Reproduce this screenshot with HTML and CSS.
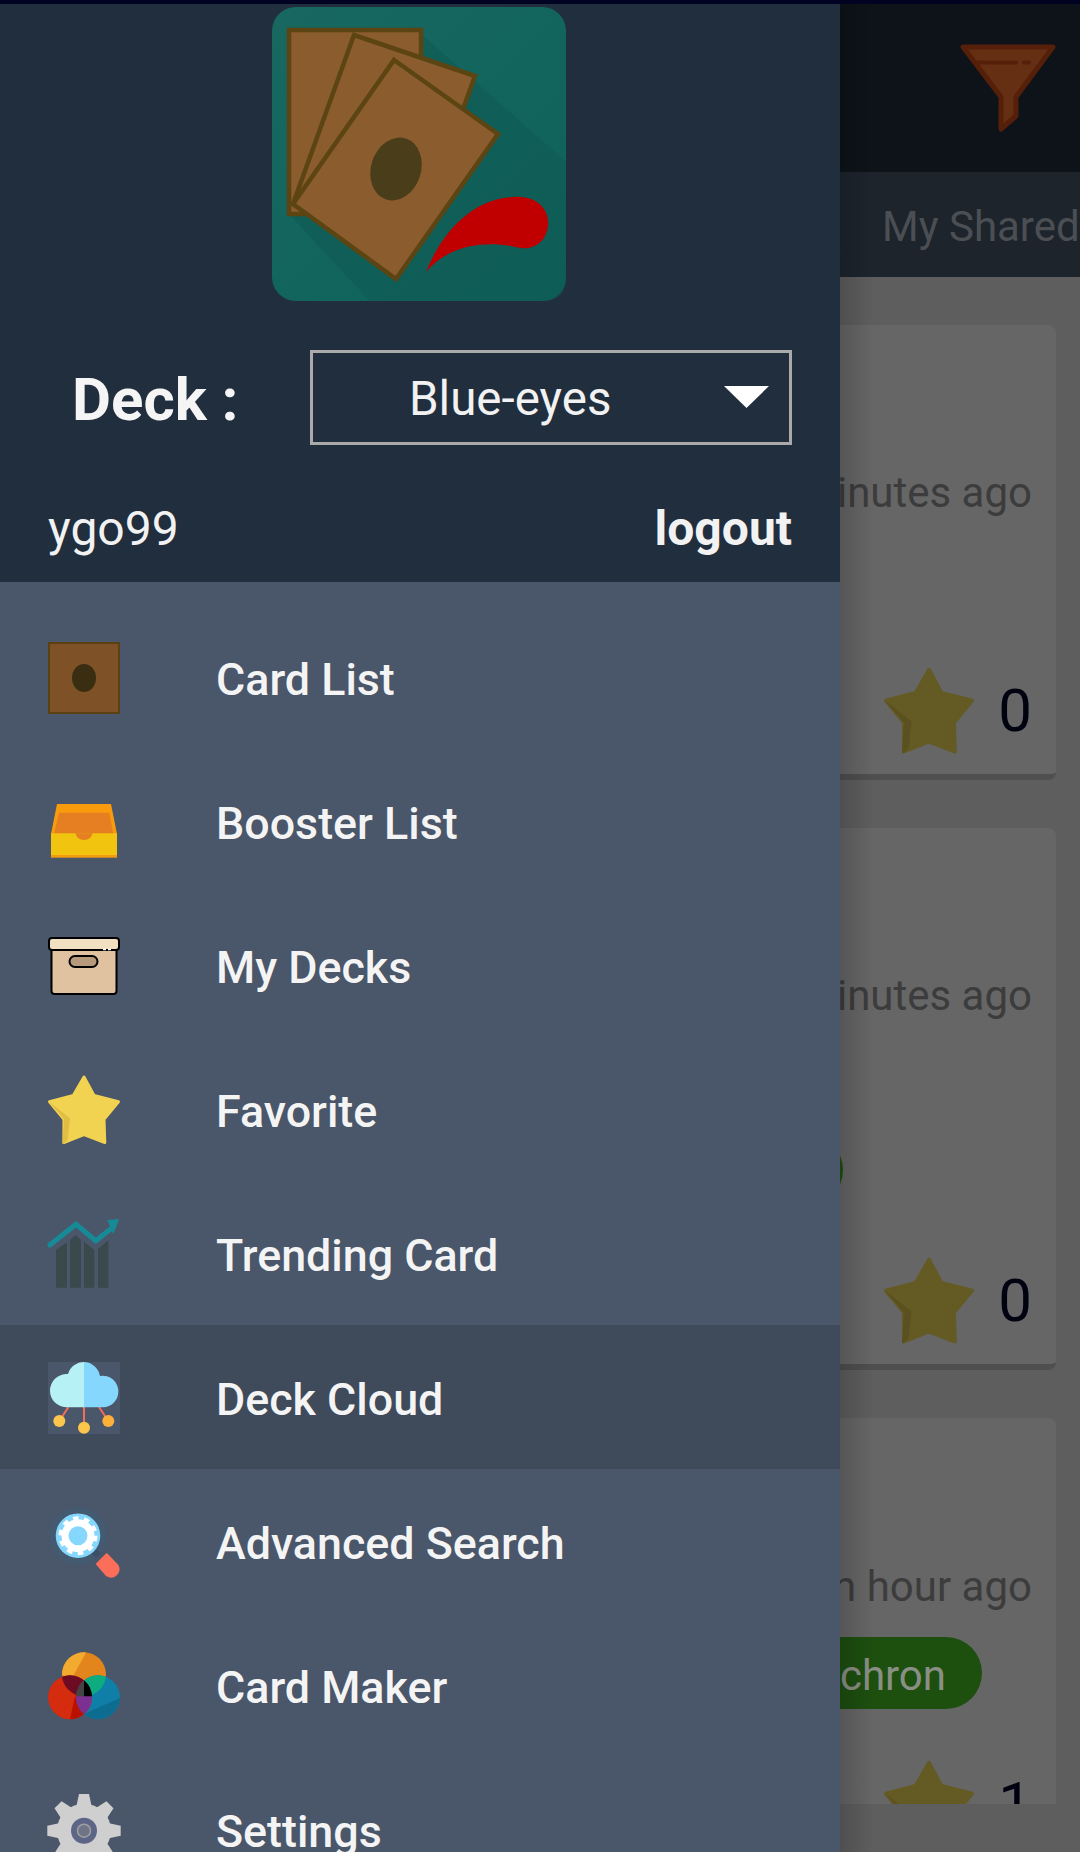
FILE: index.html
```html
<!DOCTYPE html>
<html lang="en">
<head>
<meta charset="utf-8">
<title>Deck Cloud</title>
<link rel="stylesheet" href="styles.css">
</head>
<body>
<svg class="defs" width="0" height="0" aria-hidden="true">
  <defs>
    <symbol id="star" viewBox="0 0 72 72">
      <path class="star-body" d="M36 3 46 21.500 70.500 27.700 56 45.300 56.800 68.500 36 60.500 15.800 68.500 16 45.300 1.500 27.700 25.300 21.500Z"/>
      <path class="star-shade" d="M1 27.700 22 44.300 19.700 66 14.500 70 16 45.300Z"/>
    </symbol>
    <clipPath id="clip-orange"><circle cx="36" cy="24.300" r="22"/></clipPath>
    <clipPath id="clip-red"><circle cx="22" cy="47.300" r="22"/></clipPath>
    <clipPath id="clip-blue"><circle cx="50" cy="47.300" r="22"/></clipPath>
  </defs>
</svg>

<div class="app">
  <div class="status"></div>
  <header class="topbar">
    <svg class="funnel" viewBox="0 0 96 88">
      <path class="funnel-body" d="M3 3H93L56 53V72L41 85V53Z"/>
      <path class="funnel-mark" d="M17 18.500H56M64 18.500H69"/>
    </svg>
  </header>
  <nav class="tabs">
    <span class="tab tab-public">Public Decks</span>
    <span class="tab">My Shared Decks</span>
  </nav>
  <main class="list">
    <article class="card card-one">
      <p class="time">20 minutes ago</p>
      <div class="likes">
        <svg class="like-star"><use href="#star"/></svg>
        <span class="count">0</span>
      </div>
    </article>
    <article class="card card-two">
      <p class="time">25 minutes ago</p>
      <div class="chips chips-two"><span class="chip">Dragon</span></div>
      <div class="likes">
        <svg class="like-star"><use href="#star"/></svg>
        <span class="count">0</span>
      </div>
    </article>
    <article class="card card-three">
      <p class="time">an hour ago</p>
      <div class="chips chips-three"><span class="chip">Synchron</span></div>
      <div class="likes">
        <svg class="like-star"><use href="#star"/></svg>
        <span class="count">1</span>
      </div>
    </article>
  </main>

  <aside class="drawer">
    <div class="drawer-head">
      <svg class="logo" viewBox="0 0 294 294">
        <defs>
          <linearGradient id="logo-bg" x1="0" y1="0" x2="1" y2="1">
            <stop offset="0" stop-color="#186860"/>
            <stop offset="1" stop-color="#0c625a"/>
          </linearGradient>
        </defs>
        <rect width="294" height="294" rx="24" fill="url(#logo-bg)"/>
        <path class="logo-shadow" d="M149 27 294 155V270Q294 294 270 294H98L17 207Z"/>
        <rect class="logo-card" x="17" y="23" width="132" height="184"/>
        <path class="logo-card" d="M82 28 203 69 142 238 21 197Z"/>
        <path class="logo-card" d="M122 53 226 127 124 272 21 197Z"/>
        <ellipse class="logo-hole" cx="124" cy="162" rx="25" ry="32" transform="rotate(18 124 162)"/>
        <path class="logo-swoosh" d="M154 265C170 225 200 192 241 190 265 188 278 203 276 219 274 235 262 243 248 241 225 235 182 232 154 265Z"/>
      </svg>
      <div class="deck-row">
        <span class="deck-label">Deck :</span>
        <div class="deck-select">
          <span class="deck-name">Blue-eyes</span>
          <svg class="deck-arrow" viewBox="0 0 45 22"><path d="M0 0H45L22.500 22Z"/></svg>
        </div>
      </div>
      <div class="user-row">
        <span class="user-name">ygo99</span>
        <span class="logout">logout</span>
      </div>
    </div>

    <ul class="menu">
      <li class="menu-item">
        <svg class="menu-icon" viewBox="0 0 72 72">
          <rect x="1" y="1" width="70" height="70" fill="#7e5226" stroke="#5b4013" stroke-width="2"/>
          <ellipse cx="36" cy="36" rx="12" ry="14" fill="#3a2e12"/>
        </svg>
        <span class="menu-label">Card List</span>
      </li>
      <li class="menu-item">
        <svg class="menu-icon" viewBox="0 0 72 72">
          <path fill="#f89c0e" d="M9 18H63L69 48H3Z"/>
          <path fill="#e57f22" d="M11 26.700H61.300L65.300 48H6Z"/>
          <rect x="3" y="47.300" width="66" height="22" fill="#f0c40f"/>
          <path fill="#e57f22" d="M27.700 47.300A8.300 6.700 0 0 0 44.300 47.300Z"/>
          <rect x="3" y="69" width="66" height="2.700" fill="#f39c12"/>
        </svg>
        <span class="menu-label">Booster List</span>
      </li>
      <li class="menu-item">
        <svg class="menu-icon" viewBox="0 0 72 72">
          <rect x="3.500" y="16" width="65" height="48" rx="3" fill="#e0c2a0" stroke="#000" stroke-width="2"/>
          <rect x="1" y="8" width="70" height="12" rx="3" fill="#f0dfc0" stroke="#000" stroke-width="2"/>
          <path d="M55 19.500H64" stroke="#fff" stroke-width="1.500" stroke-dasharray="3 2"/>
          <rect x="21.500" y="26" width="28" height="11" rx="5.500" fill="#b79a7c" stroke="#000" stroke-width="2"/>
        </svg>
        <span class="menu-label">My Decks</span>
      </li>
      <li class="menu-item">
        <svg class="menu-icon" viewBox="0 0 72 72">
          <path fill="#f1d351" stroke="#f1d351" stroke-width="3" stroke-linejoin="round" d="M36 3 46 21.500 70.500 27.700 56 45.300 56.800 68.500 36 60.500 15.800 68.500 16 45.300 1.500 27.700 25.300 21.500Z"/>
          <path fill="#e2bd44" d="M1 27.700 22 44.300 19.700 66 14.500 70 16 45.300Z"/>
        </svg>
        <span class="menu-label">Favorite</span>
      </li>
      <li class="menu-item">
        <svg class="menu-icon" viewBox="0 0 72 72">
          <path fill="#3a4a4c" d="M8 32 19 24.300V69.700H8ZM22 22 27.700 17 33 22V69.700H22ZM36 23.700 46.300 32V69.700H36ZM50 31 60.300 22.300V69.700H50Z"/>
          <path fill="none" stroke="#178a98" stroke-width="5" stroke-linecap="round" d="M1.800 27 28 6.300 47.700 22.700 63.700 10.300"/>
          <path fill="#178a98" d="M59.300 2 71.300 1 65.300 16.300Z"/>
        </svg>
        <span class="menu-label">Trending Card</span>
      </li>
      <li class="menu-item menu-item-active">
        <svg class="menu-icon" viewBox="0 0 72 72">
          <rect width="72" height="72" fill="#4a5669"/>
          <path fill="none" stroke="#f56c5a" stroke-width="2" d="M20.300 45.300 11.300 59M36 45V65M51 45 60.300 59"/>
          <path fill="#b5f1f5" d="M36 0A16.700 16.700 0 0 0 20 12 16.700 16.700 0 0 0 2 29 16.500 16.500 0 0 0 18 45.300H36Z"/>
          <path fill="#85d7fd" d="M36 0A16.700 16.700 0 0 1 52 14 15.500 15.500 0 0 1 70.300 30 15.500 15.500 0 0 1 55 45.300H36Z"/>
          <circle cx="11.300" cy="59" r="6" fill="#fcc64c"/>
          <circle cx="36" cy="65.700" r="6" fill="#fcc64c"/>
          <circle cx="60.300" cy="59" r="6" fill="#fbb03b"/>
        </svg>
        <span class="menu-label">Deck Cloud</span>
      </li>
      <li class="menu-item">
        <svg class="menu-icon" viewBox="0 0 72 72">
          <circle cx="30" cy="29.700" r="29" fill="#435a70"/>
          <circle cx="30" cy="29.700" r="22.300" fill="#85d7fd"/>
          <circle cx="30" cy="29.700" r="13" fill="none" stroke="#fff" stroke-width="7"/>
          <circle cx="30" cy="29.700" r="17.500" fill="none" stroke="#fff" stroke-width="4" stroke-dasharray="5.500 5.500"/>
          <path d="M46 50 51 45.500" stroke="#3b5068" stroke-width="6"/>
          <path fill="#fa6e5a" stroke="#fa6e5a" stroke-width="2" stroke-linejoin="round" d="M49 58 58.700 48.300 69.500 59.500A7.500 7.500 0 0 1 59 69.500Z"/>
        </svg>
        <span class="menu-label">Advanced Search</span>
      </li>
      <li class="menu-item">
        <svg class="menu-icon" viewBox="0 0 72 72">
          <circle cx="36" cy="24.300" r="22" fill="#e2851d"/>
          <path fill="#f2aa2f" d="M14 24.300A22 22 0 0 1 38 2.400L22 32Z"/>
          <circle cx="50" cy="47.300" r="22" fill="#0f7fa8"/>
          <path fill="#0c6d91" d="M36 64 72 48A22 22 0 0 1 36 64Z"/>
          <circle cx="22" cy="47.300" r="22" fill="#d52b0e"/>
          <path fill="#b91100" d="M27 46 36 64A22 22 0 0 1 22 69.300Z"/>
          <g clip-path="url(#clip-orange)">
            <rect x="0" y="25" width="36" height="47" fill="#6d0b22" clip-path="url(#clip-red)"/>
            <rect x="36" y="25" width="36" height="47" fill="#0ead80" clip-path="url(#clip-blue)"/>
          </g>
          <g clip-path="url(#clip-blue)">
            <rect x="28" y="25" width="16" height="47" fill="#7c3091" clip-path="url(#clip-red)"/>
          </g>
          <path fill="#444" d="M36 30.200A22 22 0 0 0 28 46.300H36Z"/>
          <path fill="#000" d="M36 30.200A22 22 0 0 1 44 46.300H36Z"/>
        </svg>
        <span class="menu-label">Card Maker</span>
      </li>
      <li class="menu-item">
        <svg class="menu-icon" viewBox="0 0 72 72">
          <g fill="#cfcfcf">
            <circle cx="36" cy="36.700" r="27"/>
            <path id="tooth" d="M31 0H41L44 14H28Z"/>
            <use href="#tooth" transform="rotate(45 36 36.700)"/>
            <use href="#tooth" transform="rotate(90 36 36.700)"/>
            <use href="#tooth" transform="rotate(135 36 36.700)"/>
            <use href="#tooth" transform="rotate(180 36 36.700)"/>
            <use href="#tooth" transform="rotate(225 36 36.700)"/>
            <use href="#tooth" transform="rotate(270 36 36.700)"/>
            <use href="#tooth" transform="rotate(315 36 36.700)"/>
          </g>
          <circle cx="36" cy="36.700" r="13" fill="#5e6688"/>
          <circle cx="36" cy="36.700" r="6.500" fill="#6f7487" stroke="#9ea0a0" stroke-width="1.500"/>
        </svg>
        <span class="menu-label">Settings</span>
      </li>
    </ul>
  </aside>
</div>
</body>
</html>
```

FILE: styles.css
```css
* { box-sizing: border-box; }

html, body {
  margin: 0;
  padding: 0;
  background: #5e5e5e;
}

body {
  font-family: Roboto, "Liberation Sans", sans-serif;
}

.defs { position: absolute; }

.app {
  position: relative;
  width: 1080px;
  height: 1852px;
  overflow: hidden;
  display: flex;
  flex-direction: column;
}

.status {
  height: 4px;
  flex: none;
  background: #000321;
}

.topbar {
  height: 168px;
  flex: none;
  background: #0d1318;
  display: flex;
  justify-content: flex-end;
  align-items: flex-start;
  padding: 40px 24px 0 0;
}

.funnel { width: 96px; height: 88px; }
.funnel-body { fill: #642f13; stroke: #561f0a; stroke-width: 5; stroke-linejoin: round; }
.funnel-mark { fill: none; stroke: #561f0a; stroke-width: 4; stroke-linecap: round; }

.tabs {
  height: 105px;
  flex: none;
  background: #1d242c;
  display: flex;
  align-items: center;
  white-space: nowrap;
  font-size: 42px;
  color: #4b4f54;
  padding-top: 4px;
}

.tab-public { flex: 0 0 882px; }

.list {
  height: 1527px;
  flex: none;
  overflow: hidden;
  padding: 48px 24px 0;
  display: flex;
  flex-direction: column;
  gap: 48px;
}

.card {
  flex: none;
  background: #666;
  border-bottom: 6px solid #4f4f4f;
  border-radius: 8px;
  padding: 142px 24px 20px;
}

.card-three { padding-top: 143px; }

.time {
  margin: 0;
  height: 48px;
  line-height: 52px;
  text-align: right;
  font-size: 42px;
  color: #3c3c3c;
}

.chips {
  display: flex;
  justify-content: flex-end;
  height: 72px;
}

.chips-two { margin: 116px 189px 0 0; }
.chips-three { margin: 28px 50px 0 0; }

.chip {
  height: 72px;
  line-height: 78px;
  padding: 0 36px;
  border-radius: 36px;
  background: #1d4f0f;
  color: #8a8f86;
  font-size: 42px;
}

.likes {
  display: flex;
  justify-content: flex-end;
  align-items: center;
  gap: 24px;
  height: 86px;
  margin-top: 52px;
}

.card-one .likes { margin-top: 153px; }

.like-star { width: 90px; height: 90px; }
.star-body { fill: #645a23; stroke: #645a23; stroke-width: 3; stroke-linejoin: round; }
.star-shade { fill: #5a5020; }

.count {
  font-size: 60px;
  line-height: 60px;
  color: #000210;
}

.drawer {
  position: absolute;
  left: 0;
  top: 4px;
  bottom: 0;
  width: 840px;
  background: #4a5669;
}

.drawer::after {
  content: "";
  position: absolute;
  left: 100%;
  top: 0;
  bottom: 0;
  width: 34px;
  background: linear-gradient(to right, rgba(0, 0, 0, .16), rgba(0, 0, 0, 0));
}

.drawer-head {
  height: 578px;
  background: #212e3e;
  display: flex;
  flex-direction: column;
  padding-top: 3px;
}

.logo {
  width: 294px;
  height: 294px;
  flex: none;
  margin-left: 272px;
}

.logo-shadow { fill: #0f5a53; opacity: .6; }
.logo-card { fill: #8a5c2e; stroke: #5c4413; stroke-width: 4.500; stroke-linejoin: miter; }
.logo-hole { fill: #4a3d1a; }
.logo-swoosh { fill: #c00000; }

.deck-row {
  display: flex;
  align-items: center;
  height: 95px;
  margin-top: 49px;
  padding: 0 48px 0 72px;
}

.deck-label {
  flex: 0 0 238px;
  font-size: 60px;
  font-weight: 700;
  color: #f5f5f5;
  padding-top: 4px;
}

.deck-select {
  position: relative;
  flex: 1;
  height: 95px;
  border: 3px solid #aaa;
  display: flex;
  align-items: center;
  padding-left: 96px;
}

.deck-name {
  font-size: 47.500px;
  color: #f2f2f2;
  padding-top: 2px;
}

.deck-arrow {
  position: absolute;
  right: 20px;
  top: 33px;
  width: 45px;
  height: 22px;
  fill: #fff;
}

.user-row {
  display: flex;
  justify-content: space-between;
  align-items: center;
  padding: 0 48px;
  margin-top: 55px;
  height: 56px;
  font-size: 48px;
  color: #f2f2f2;
}

.logout { font-weight: 700; }

.menu {
  list-style: none;
  margin: 0;
  padding: 23px 0 0;
}

.menu-item {
  height: 144px;
  display: flex;
  align-items: center;
  padding-left: 48px;
}

.menu-item-active { background: #3f4a5b; }

.menu-icon {
  width: 72px;
  height: 72px;
  flex: none;
  margin-top: 2px;
  overflow: visible;
}

.menu-label {
  margin-left: 96px;
  margin-top: 4px;
  font-size: 44.800px;
  font-weight: 500;
  color: #f4f4f4;
}
```
